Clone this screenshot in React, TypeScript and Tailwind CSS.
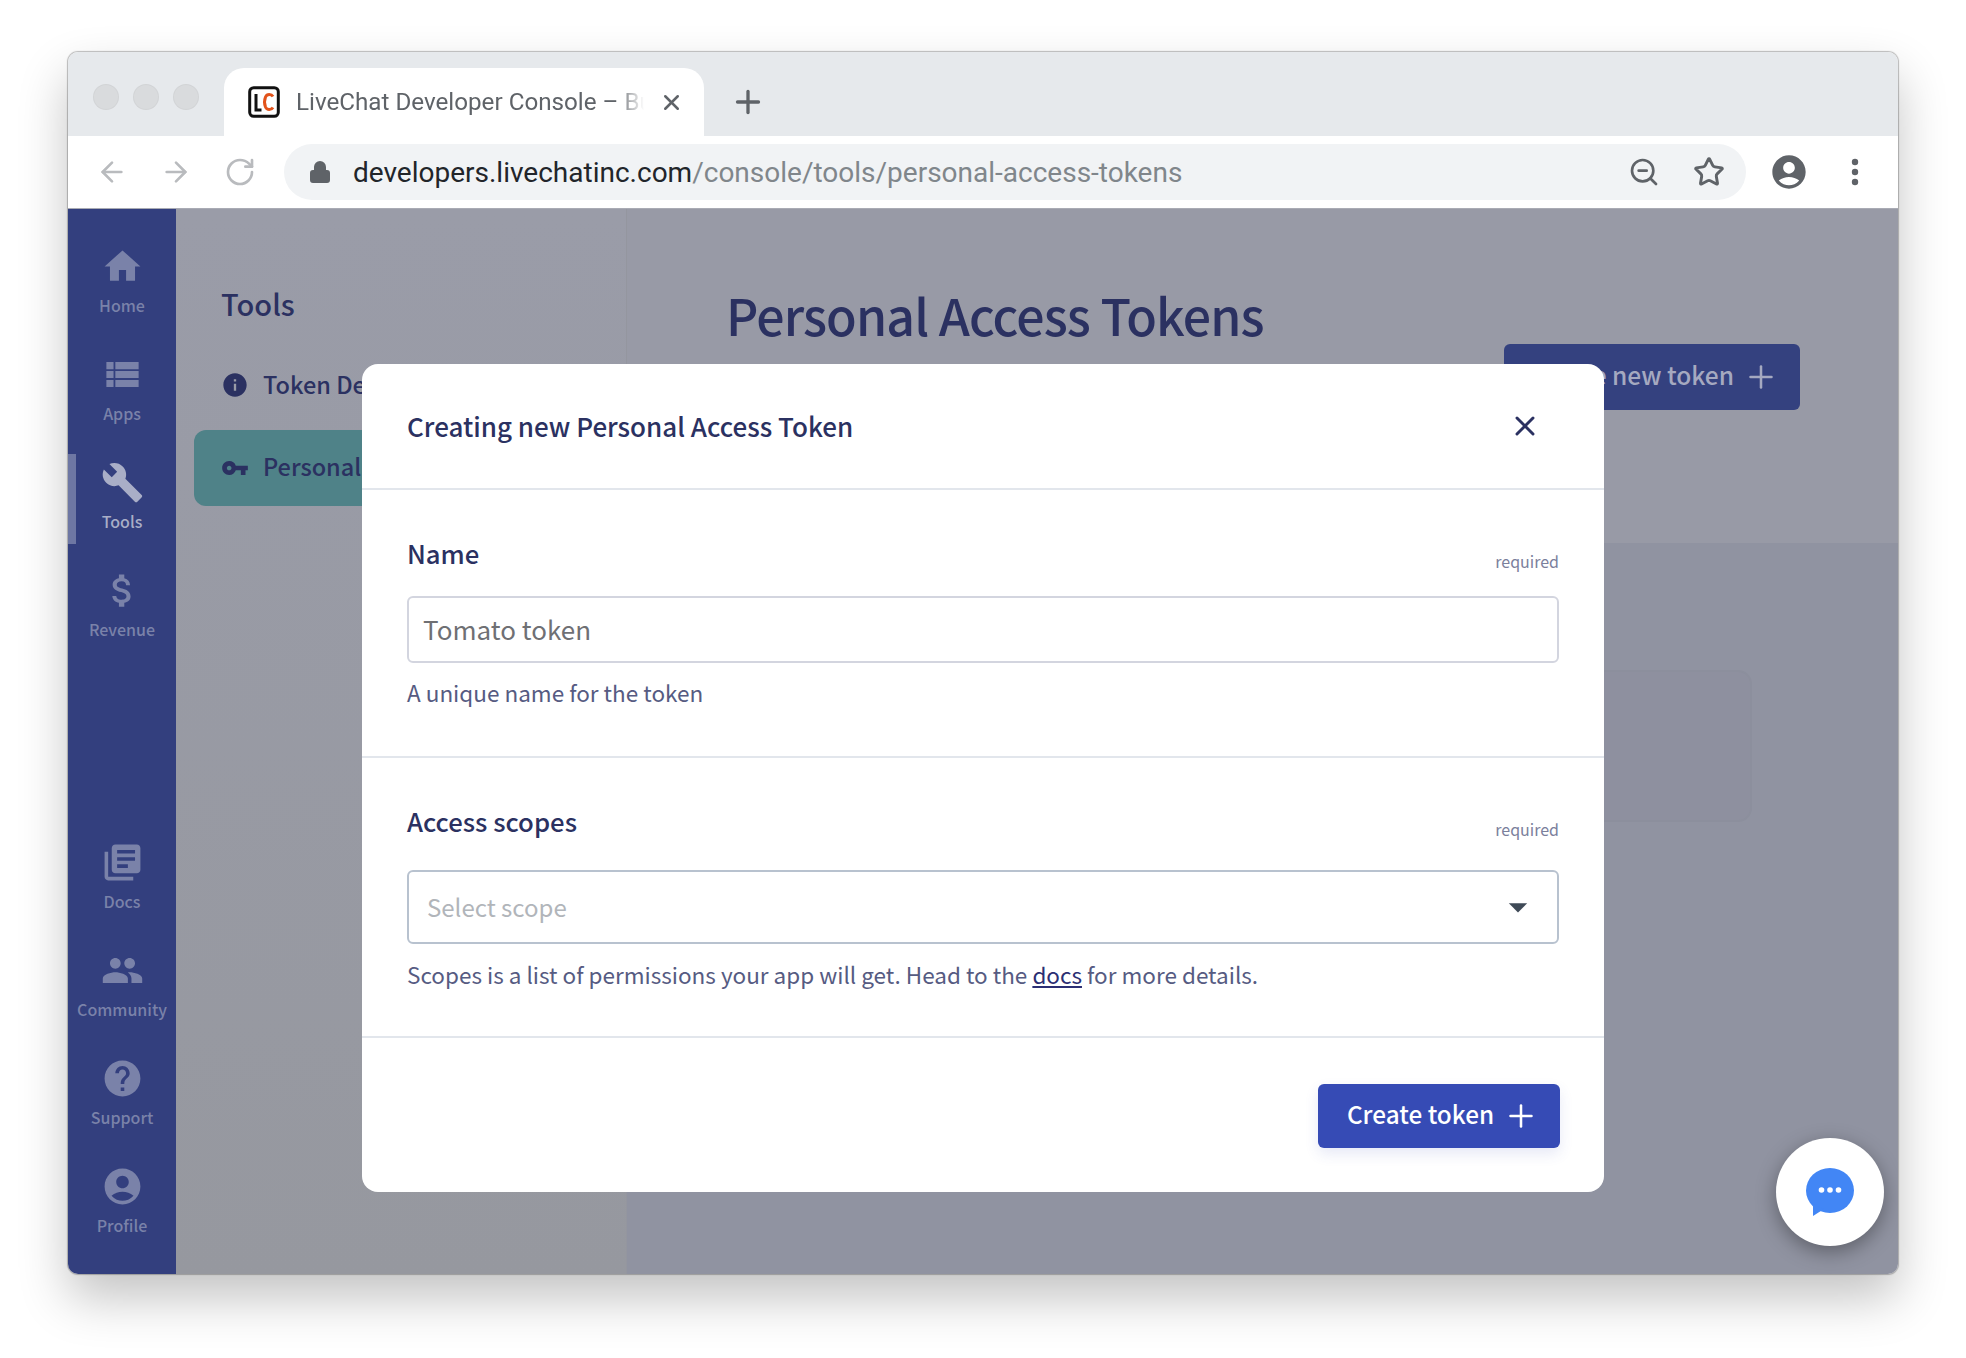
import { ArrowLeft, ArrowRight, RotateCw, Plus, X, Lock, Star, ZoomOut } from 'lucide-react';
import { MdHome, MdViewList, MdBuild, MdAttachMoney, MdLibraryBooks, MdPeople, MdHelp, MdAccountCircle, MdInfo, MdVpnKey, MdArrowDropDown } from 'react-icons/md';
import type { ComponentType } from 'react';

const sans = 'font-["Noto_Sans_CJK_JP","Noto_Sans",sans-serif]';

interface NavItem {
  label: string;
  Icon: ComponentType<{ className?: string }>;
  active?: boolean;
}

const topNav: NavItem[] = [
  { label: 'Home', Icon: MdHome },
  { label: 'Apps', Icon: MdViewList },
  { label: 'Tools', Icon: MdBuild, active: true },
  { label: 'Revenue', Icon: MdAttachMoney },
];

const bottomNav: NavItem[] = [
  { label: 'Docs', Icon: MdLibraryBooks },
  { label: 'Community', Icon: MdPeople },
  { label: 'Support', Icon: MdHelp },
  { label: 'Profile', Icon: MdAccountCircle },
];

function SideLink({ item }: { item: NavItem }) {
  const { label, Icon, active } = item;
  return (
    <div className="relative flex h-[90px] w-full flex-col items-center pt-[7px]">
      {active && <div className="absolute left-0 top-0 h-full w-2 bg-[#6e77a3]" />}
      <Icon className={`h-[43px] w-[43px] ${active ? 'text-[#a9aec7]' : 'text-[#7a82a9]'}`} />
      <span className={`mt-[7px] text-[16px] leading-5 font-medium ${active ? 'text-[#a9aec7]' : 'text-[#7a82a9]'}`}>{label}</span>
    </div>
  );
}

export default function App() {
  return (
    <div className={`h-[1358px] w-[1966px] bg-white pl-[68px] pr-[68px] pt-[52px] ${sans}`}>
      <div className="relative flex h-[1222px] w-[1830px] flex-col overflow-hidden rounded-[10px] shadow-[0_0_1px_1px_rgba(0,0,0,0.25),0_24px_50px_rgba(0,0,0,0.24)]">
        {/* Tab strip */}
        <div className="flex h-[84px] items-end bg-[#e6e9ec] font-['Roboto',sans-serif]">
          <div className="ml-[26px] flex h-[68px] items-start gap-4 pt-[17px]">
            <span className="h-6 w-6 rounded-full bg-[#d9dbdd] ring-1 ring-[#d2d4d6]" />
            <span className="h-6 w-6 rounded-full bg-[#d9dbdd] ring-1 ring-[#d2d4d6]" />
            <span className="h-6 w-6 rounded-full bg-[#d9dbdd] ring-1 ring-[#d2d4d6]" />
          </div>
          <div className="ml-[26px] flex h-[68px] w-[480px] items-center rounded-t-[20px] bg-white pl-6 pr-[20px]">
            <svg viewBox="0 0 32 32" className="h-8 w-8 shrink-0">
              <rect x="1.700" y="1.700" width="28.600" height="28.600" rx="4" fill="#fff" stroke="#111" strokeWidth="3" />
              <path d="M8 8v16h5.500" fill="none" stroke="#111" strokeWidth="3" />
              <path d="M25 10.500c-1.500-2.500-6-3-7.500 0.500-1.200 3-1.200 7 0 10 1.500 3.500 6 3 7.500 0.500" fill="none" stroke="#e2531b" strokeWidth="3" />
            </svg>
            <div className="ml-[16px] w-[348px] overflow-hidden whitespace-nowrap text-[24.200px] text-[#5f6368] [mask-image:linear-gradient(to_right,black_92%,transparent)]">
              LiveChat Developer Console – Build
            </div>
            <X className="ml-auto h-[25px] w-[25px] text-[#5f6368]" strokeWidth={2.4} />
          </div>
          <Plus className="mb-[16px] ml-[26px] h-9 w-9 text-[#5f6368]" strokeWidth={2.2} />
        </div>

        {/* Toolbar */}
        <div className="flex h-[73px] items-center border-b border-[#a9abb4] bg-white font-['Roboto',sans-serif]">
          <div className="ml-[28px] flex items-center gap-[32px] text-[#b9bbbe]">
            <ArrowLeft className="h-8 w-8" strokeWidth={2} />
            <ArrowRight className="h-8 w-8" strokeWidth={2} />
            <RotateCw className="h-8 w-8" strokeWidth={2} />
          </div>
          <div className="ml-[28px] flex h-14 w-[1462px] items-center rounded-full bg-[#f1f3f5] pl-6 pr-[21px]">
            <Lock className="h-6 w-6 fill-[#5f6368] text-[#5f6368]" strokeWidth={2} />
            <div className="ml-[21px] whitespace-nowrap pt-px text-[28px] text-[#22252a]">
              developers.livechatinc.com<span className="text-[#80868b]">/console/tools/personal-access-tokens</span>
            </div>
            <ZoomOut className="ml-auto h-8 w-8 text-[#5f6368]" strokeWidth={2} />
            <Star className="ml-[33px] h-8 w-8 text-[#5f6368]" strokeWidth={2.2} />
          </div>
          <MdAccountCircle className="ml-[23px] h-[40px] w-[40px] text-[#5f6368]" />
          <svg viewBox="0 0 8 32" className="ml-[42px] h-8 w-2 fill-[#5f6368]">
            <circle cx="4" cy="6" r="3.200" />
            <circle cx="4" cy="16" r="3.200" />
            <circle cx="4" cy="26" r="3.200" />
          </svg>
        </div>

        {/* Dimmed console */}
        <div className="relative flex min-h-0 flex-1">
          <nav className="flex w-[108px] flex-col justify-between bg-[#333f7e] pb-[26px] pt-[29px]">
            <div className="flex flex-col gap-[18px]">
              {topNav.map((item) => (
                <SideLink key={item.label} item={item} />
              ))}
            </div>
            <div className="flex flex-col gap-[18px]">
              {bottomNav.map((item) => (
                <SideLink key={item.label} item={item} />
              ))}
            </div>
          </nav>

          <aside className="w-[451px] border-r border-[#94969f] bg-gradient-to-b from-[#9a9ca8] to-[#96989f] pl-[18px] pt-[74px] text-[#2b3161]">
            <div className="pl-[27px] text-[29px] leading-10 font-medium">Tools</div>
            <div className="mt-[42px] flex h-[40px] items-center gap-[14px] whitespace-nowrap pl-[27px] text-[23.500px] font-medium">
              <MdInfo className="h-7 w-7" /> Token Debugger
            </div>
            <div className="mt-[25px] flex h-[76px] w-[420px] items-center gap-[14px] whitespace-nowrap rounded-[12px] bg-[#4f8288] pl-[27px] text-[23.500px] font-medium">
              <MdVpnKey className="h-7 w-7" /> <span className="pb-[2px]">Personal Access Tokens</span>
            </div>
          </aside>

          <main className="flex min-w-0 flex-1 flex-col bg-[#9093a1]">
            <div className="flex h-[334px] flex-col bg-[#989aa6] pl-[99px] pr-[98px] pt-[71px]">
              <h1 className="text-[50px] leading-[68px] font-medium tracking-[-0.860px] text-[#2b3161]">Personal Access Tokens</h1>
              <div className="-mt-[4px] flex h-[66px] w-[296px] items-center justify-end gap-[9px] self-end rounded-[6px] bg-[#34417f] pr-[21px] text-[24.500px] font-medium text-[#a5a9c0]">
                <span className="pb-1">Create new token</span> <Plus className="h-9 w-9" strokeWidth={1.7} />
              </div>
            </div>
            <div className="flex flex-col pr-[146px] pt-[127px]">
              <div className="h-[152px] w-[270px] self-end rounded-[14px] border-2 border-[#8c8f9d] bg-[#8e909f]" />
            </div>
          </main>

          {/* Modal */}
          <div className="absolute left-[294px] top-[155px] flex h-[828px] w-[1242px] flex-col rounded-[16px] bg-white text-[#2b3161]">
            <div className="flex h-[126px] shrink-0 items-center justify-between border-b-2 border-[#e2e6ec] pl-[45px] pr-[63px]">
              <h2 className="pb-[2px] text-[26px] font-medium">Creating new Personal Access Token</h2>
              <X className="h-8 w-8" strokeWidth={2.2} />
            </div>
            <section className="h-[268px] shrink-0 border-b-2 border-[#e2e6ec] px-[45px] pt-[45px]">
              <div className="flex items-end justify-between">
                <label className="text-[25.700px] leading-9 font-medium">Name</label>
                <span className="text-[16px] leading-5 text-[#7b809c]">required</span>
              </div>
              <div className="mt-[25px] flex h-[67px] items-center rounded-[6px] border-2 border-[#d3d5df] pb-[2px] pl-[14px] text-[26px] text-[#6f7074]">
                Tomato token
              </div>
              <p className="mt-[13px] text-[22.500px] leading-8 text-[#565b82]">A unique name for the token</p>
            </section>
            <section className="h-[280px] shrink-0 border-b-2 border-[#e2e6ec] px-[45px] pt-[45px]">
              <div className="flex items-end justify-between">
                <label className="text-[25.700px] leading-9 font-medium">Access scopes</label>
                <span className="text-[16px] leading-5 text-[#7b809c]">required</span>
              </div>
              <div className="mt-[31px] flex h-[74px] items-center justify-between rounded-[6px] border-2 border-[#b8c2cf] pl-[18px] pr-[17px] text-[24px] text-[#b1b5ba]">
                Select scope
                <MdArrowDropDown className="h-11 w-11 text-[#3f4a57]" />
              </div>
              <p className="mt-[14px] text-[22.500px] leading-8 text-[#565b82]">
                Scopes is a list of permissions your app will get. Head to the{' '}
                <a className="text-[#2b2e73] underline">docs</a> for more details.
              </p>
            </section>
            <div className="flex flex-1 items-start justify-end pr-[44px] pt-[46px]">
              <button className="flex h-[64px] w-[242px] items-center justify-center gap-[9px] rounded-[6px] bg-[#364bb5] pl-2 text-[24.300px] font-medium text-white shadow-[0_6px_14px_rgba(54,75,181,0.12)]">
                <span className="pb-1">Create token</span> <Plus className="h-9 w-9" strokeWidth={1.7} />
              </button>
            </div>
          </div>

          {/* Chat bubble */}
          <div className="absolute bottom-[28px] right-[14px] flex h-[108px] w-[108px] items-center justify-center rounded-full bg-white shadow-[0_6px_20px_rgba(0,0,0,0.35)]">
            <svg viewBox="0 0 48 48" className="h-12 w-12">
              <ellipse cx="24" cy="22.500" rx="24" ry="22.500" fill="#4286f5" />
              <path d="M7 36V48L18 41Z" fill="#4286f5" />
              <circle cx="15.500" cy="22" r="2.800" fill="#fff" />
              <circle cx="24" cy="22" r="2.800" fill="#fff" />
              <circle cx="32.500" cy="22" r="2.800" fill="#fff" />
            </svg>
          </div>
        </div>
      </div>
    </div>
  );
}
